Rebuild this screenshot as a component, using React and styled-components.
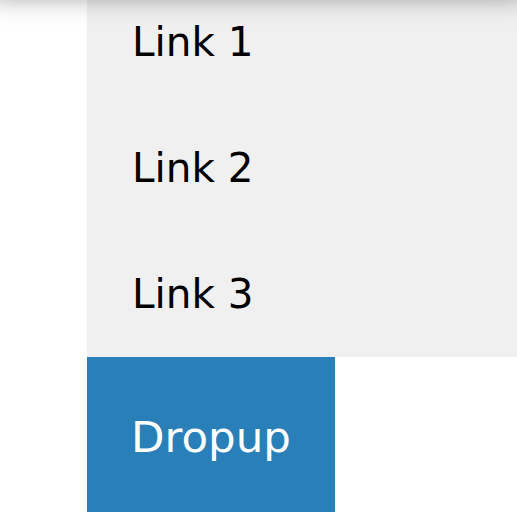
import React from 'react';
import styled, { createGlobalStyle } from 'styled-components';

const GlobalStyle = createGlobalStyle`
  html, body {
    margin: 0;
    background: #fff;
    overflow: hidden;
  }

  body {
    font-family: "DejaVu Sans", Verdana, sans-serif;
  }
`;

// header bar sitting just above the fold; only its shadow shows
const Shade = styled('div')`
  position: relative;
  z-index: 1;
  height: 40px;
  margin: -48px -10px 0;
  background: #fff;
  box-shadow: 0 0 30px rgba(0, 0, 0, 0.55);
`;

const Dropup = styled('div')`
  display: flex;
  flex-direction: column;
  align-items: flex-start;
  padding-left: 87px;
  margin-top: -13px;
`;

const Menu = styled('div')`
  align-self: stretch;
  background: #f0f0f0;
`;

const MenuLink = styled('a')`
  display: block;
  padding: 40px 45px;
  font-size: 40.5px;
  line-height: 46px;
  color: #000;
  text-decoration: none;
`;

const Button = styled('button')`
  width: 248px;
  padding: 55px 0 55px 44px;
  border: none;
  background: #2980b9;
  color: #fff;
  font-family: inherit;
  font-size: 43.5px;
  line-height: 50px;
  text-align: left;
  cursor: pointer;
`;

const links = ['Link 1', 'Link 2', 'Link 3'];

const App = () => (
  <>
    <GlobalStyle />
    <Shade />
    <Dropup>
      <Menu>
        {links.map(link => (
          <MenuLink key={link} href="#">{link}</MenuLink>
        ))}
      </Menu>
      <Button type="button">Dropup</Button>
    </Dropup>
  </>
);

export default App;
